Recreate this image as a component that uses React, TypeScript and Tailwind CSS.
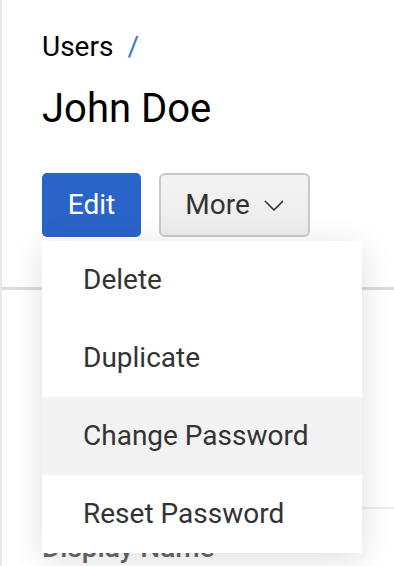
import React from "react";

const items = ["Delete", "Duplicate", "Change Password", "Reset Password"];

const App = () => {
  return (
    <div className="min-h-screen h-[566px] overflow-hidden bg-white border-l-2 border-[#e6e9e9] font-['Roboto',sans-serif]">
      {/* header */}
      <div className="pl-10 pt-[32px]">
        <div className="flex items-center text-[28px] leading-[30px] text-black">
          <span>Users</span>
          <span className="ml-[14px] text-[#3b78d8]">/</span>
        </div>
        <h1 className="mt-[24px] text-[40px] leading-[46px] text-black">John Doe</h1>

        {/* actions */}
        <div className="relative mt-[41px] flex gap-[18px]">
          <button className="h-16 w-[99px] rounded-[5px] bg-[#2b64c8] text-[28px] text-white">
            Edit
          </button>
          <button className="flex h-16 w-[151px] items-center justify-center gap-[14px] rounded-[6px] border-2 border-[#c9c9c9] bg-gradient-to-b from-[#f3f3f3] to-[#ececec] text-[28px] text-[#333]">
            <span>More</span>
            <svg width="20" height="11" viewBox="0 0 20 11" fill="none">
              <polyline points="1,1 10,10 19,1" stroke="#333" strokeWidth="1.6" />
            </svg>
          </button>

          {/* dropdown */}
          <div className="absolute left-0 top-[68px] z-10 w-[320px] bg-white shadow-[0_6px_30px_rgba(0,0,0,0.13)]">
            {items.map((item) => (
              <div
                key={item}
                className={
                  item === "Change Password"
                    ? "flex h-[78px] items-center bg-[#f3f3f3] pl-[41px] text-[28px] text-[#333]"
                    : "flex h-[78px] items-center pl-[41px] text-[28px] text-[#333]"
                }
              >
                {item}
              </div>
            ))}
          </div>
        </div>
      </div>

      {/* divider */}
      <div className="mt-[50px] h-[3px] bg-[#dcdcdc]" />

      {/* details */}
      <div className="ml-10 mt-[217px] h-[2px] bg-[#ececec]" />
      <div className="pl-10 pt-[24px] text-[28px] leading-[30px] font-medium text-[#666]">
        Display Name
      </div>
    </div>
  );
};

export default App;
